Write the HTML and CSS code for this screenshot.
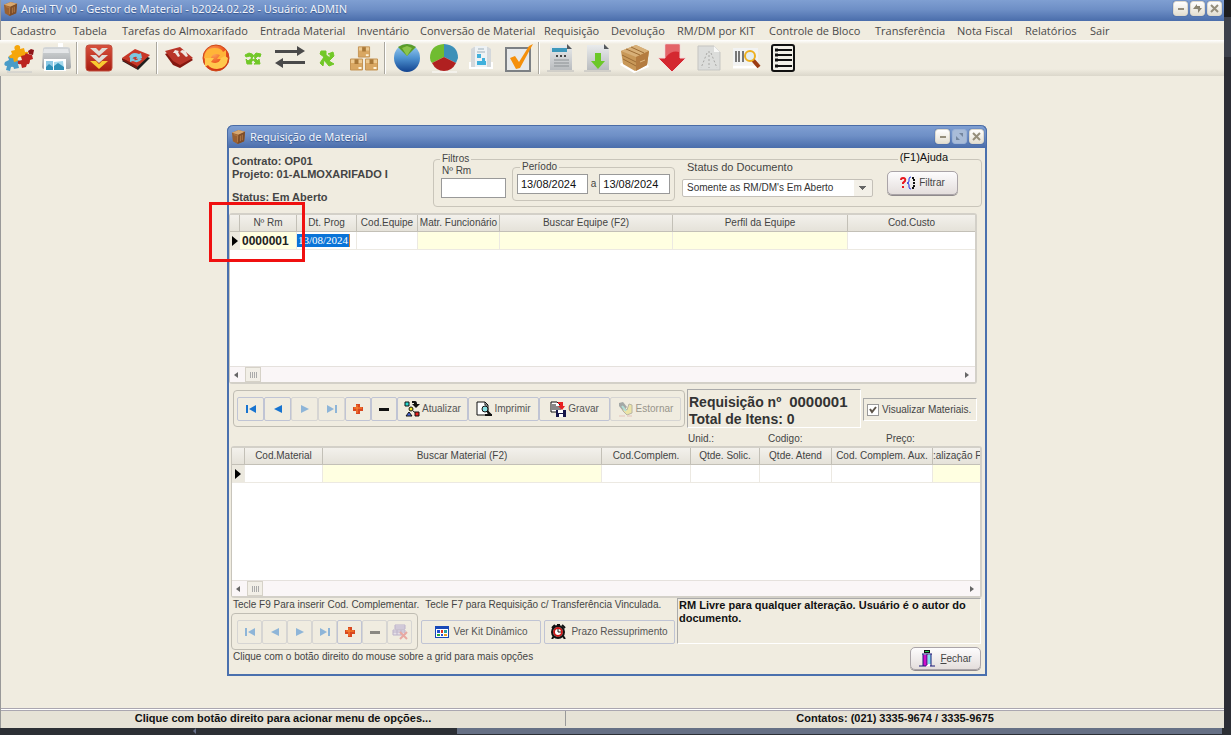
FILE: index.html
```html
<!DOCTYPE html>
<html lang="pt-BR">
<head>
<meta charset="utf-8">
<title>Aniel TV v0 - Gestor de Material</title>
<link rel="stylesheet" href="styles.css">
</head>
<body>
<svg class="defs" width="0" height="0" aria-hidden="true">
  <defs>
    <linearGradient id="gBlue" x1="0" y1="0" x2="0" y2="1"><stop offset="0" stop-color="#9fd0f2"/><stop offset=".5" stop-color="#4e92d0"/><stop offset="1" stop-color="#12438f"/></linearGradient>
    <linearGradient id="gRed" x1="0" y1="0" x2="0" y2="1"><stop offset="0" stop-color="#d8503c"/><stop offset="1" stop-color="#a81c10"/></linearGradient>
    <linearGradient id="gGrey" x1="0" y1="0" x2="0" y2="1"><stop offset="0" stop-color="#e9ebec"/><stop offset="1" stop-color="#b9bcbf"/></linearGradient>
    <linearGradient id="gTray" x1="0" y1="0" x2="0" y2="1"><stop offset="0" stop-color="#d4d7d9"/><stop offset="1" stop-color="#9fa3a6"/></linearGradient>
    <radialGradient id="gOrange" cx=".4" cy=".3" r=".8"><stop offset="0" stop-color="#ffb060"/><stop offset=".5" stop-color="#ee5a22"/><stop offset="1" stop-color="#c02010"/></radialGradient>
    <symbol id="crate" viewBox="0 0 16 16"><path d="M1 4 8 1l7 2-1 10-7 3-5-3z" fill="#9a6030"/><path d="M1 4 8 1l7 2-7 3z" fill="#d8a870"/><path d="M8 6l7-3-1 10-7 3z" fill="#7c4c28"/><path d="M3 6l4 1v7M10 7v6M12 6v6" stroke="#b47c48" fill="none"/></symbol>
    <symbol id="first" viewBox="0 0 12 12"><path d="M1 2h2v8H1zM11 2v8L4 6z" fill="currentColor"/></symbol>
    <symbol id="prev" viewBox="0 0 12 12"><path d="M10 2v8L2 6z" fill="currentColor"/></symbol>
    <symbol id="next" viewBox="0 0 12 12"><path d="M2 2v8l8-4z" fill="currentColor"/></symbol>
    <symbol id="last" viewBox="0 0 12 12"><path d="M9 2h2v8H9zM1 2v8l7-4z" fill="currentColor"/></symbol>
    <symbol id="plus" viewBox="0 0 12 12"><path d="M4 1h4v3h3v4H8v3H4V8H1V4h3z" fill="#d84820"/><path d="M5 2v8M2 5h8" stroke="#ff8a30" fill="none"/></symbol>
    <symbol id="minus" viewBox="0 0 12 12"><path d="M1 5h10v3H1z" fill="currentColor"/></symbol>
    <symbol id="box" viewBox="0 0 14 14"><path d="M1 2h12v11H1z" fill="#d9a762"/><path d="M1 2h12v4H1z" fill="#edc98f"/><path d="M5 2h4v5H5z" fill="#a87838"/><path d="M9 10h3v2H9z" fill="#fff3d8"/><path d="M1 2h12v11H1z" fill="none" stroke="#c49454"/></symbol>
  </defs>
</svg>
<div class="screen">
  <div class="app">
    <header class="titlebar">
      <svg class="app-icon"><use href="#crate"/></svg>
      <h1 class="title">Aniel TV v0 - Gestor de Material - b2024.02.28 - Usuário: ADMIN</h1>
      <div class="window-buttons">
        <button class="wbtn" aria-label="Minimizar"><svg viewBox="0 0 13 13"><path d="M4 6h6v2H4z" fill="#958e7c"/></svg></button>
        <button class="wbtn" aria-label="Restaurar"><svg viewBox="0 0 13 13"><path d="M6 2v5H2zM7 11V6h4zM6 7V4h3v4z" fill="#8a8472"/></svg></button>
        <button class="wbtn" aria-label="Sair do programa"><svg viewBox="0 0 13 13"><path d="M3 3l7 7M10 3l-7 7" stroke="#958e7c" stroke-width="2"/></svg></button>
      </div>
    </header>
    <nav class="menubar">
      <button>Cadastro</button><button>Tabela</button><button>Tarefas do Almoxarifado</button><button>Entrada Material</button><button>Inventário</button><button>Conversão de Material</button><button>Requisição</button><button>Devolução</button><button>RM/DM por KIT</button><button>Controle de Bloco</button><button>Transferência</button><button>Nota Fiscal</button><button>Relatórios</button><button>Sair</button>
    </nav>
    <div class="toolbar">
      <button class="tool" aria-label="Integração"><svg viewBox="0 0 32 32"><path d="M4 30h25" stroke="#c8c8c8"/><path d="M2 20l4-2-1-3q2-2 4 1l4-2 1 4q4 0 3 3l-2 1 1 4-5 1q0-3-3-2l-1 4-4-1 1-4q-4 0-2-4z" fill="#4a9cc8"/><path d="M8 9l4-1q-2-4 2-5 4 0 3 4l4-1 1 4q4-1 3 2l-2 2 1 3-5 1q0-4-3-3-2 1-1 4l-4 1-1-4q-4 1-4-2l3-2z" fill="#f5a60c"/><path d="M18 14l4-1q0-3 3-1l4 1 1 4-3 1q0 5-3 4l-1 3-4 1-1-4q-4 1-3-3l4-1z" fill="#bc2420"/><path d="M25 9l3-2 3 1-1 5-4-1z" fill="#8c1418"/></svg></button>
      <button class="tool" aria-label="Imprimir imagens"><svg viewBox="0 0 32 32"><path d="M18 1h5v4h-5z" fill="#fff"/><path d="M3 7q0-2 3-2h21q3 0 3 2l1 18q0 2-2 2H4q-2 0-2-2z" fill="url(#gTray)"/><path d="M4 7h24l1 4H3z" fill="#e4e6e8"/><path d="M4 17h22v12H4z" fill="#fff"/><path d="M6 19h7v9H6z" fill="#8cc8e4"/><path d="M14 20l9-1 1 9H14z" fill="#a4d8ec"/><path d="M6 25l3-3 4 3v3H6zM14 24l4-3 6 4v3H14z" fill="#2e90b8"/></svg></button>
      <span class="tool-sep"></span>
      <button class="tool" aria-label="Baixar"><svg viewBox="0 0 32 32"><rect x="3" y="3" width="26" height="26" rx="3" fill="url(#gRed)" stroke="#c05040"/><path d="M7 6h6l3 3 3-3h6l-9 8zM7 13h6l3 3 3-3h6l-9 8z" fill="#e0dcd6"/><path d="M7 19h6l3 3 3-3h6l-9 8z" fill="#f8c830"/></svg></button>
      <button class="tool" aria-label="Atualizar estoque"><svg viewBox="0 0 32 32"><path d="M2 19l13-9 15 6-12 12z" fill="#202020"/><path d="M2 16l13-9 15 6-13 12z" fill="#c83828"/><path d="M2 16v2l15 9v-3z" fill="#7c1810"/><path d="M9 15q3-6 10-3l2-1 1 5-6 1 1-2q-3-1-5 2zM22 17q-4 5-9 2l-3 1v-4l5 1-1 1q3 1 5-2z" fill="#7cc8e0"/></svg></button>
      <span class="tool-sep"></span>
      <button class="tool" aria-label="Devolver"><svg viewBox="0 0 32 32"><path d="M2 12l15-6 13 12-13 8-7-3z" fill="#841810"/><path d="M2 9l15-4 13 11-13 7-7-4z" fill="#b83428"/><path d="M10 11l2-3 4 1-1 1 2 4-2 1-3-4zM17 10l2-2 5 1-1 1 2 4-2 1-4-4z" fill="#eee6e0"/></svg></button>
      <button class="tool" aria-label="Reprocessar"><svg viewBox="0 0 32 32"><circle cx="16" cy="16" r="13" fill="url(#gOrange)" stroke="#d04818"/><path d="M4 16Q5 5 15 6q6 0 8 4l3-2v9h-9l3-4q-7-3-9 3l-4 2z" fill="#ffb438"/><path d="M28 16q-1 11-11 11-6 0-9-4l-3 2v-9h9l-3 4q8 3 10-4l4-2z" fill="#ffc84c"/></svg></button>
      <button class="tool" aria-label="Permutar"><svg viewBox="0 0 32 32"><path d="M8 13l4-2q4 0 6 5l3 3 1-2 1 5h-6l2-1-6-7-4 1zM24 12l-5-1-4 5-4 3-2-2 1 5h5l-1-2 7-6 2 1z" fill="#72c828" stroke="#72c828"/></svg></button>
      <button class="tool" aria-label="Transferir"><svg viewBox="0 0 32 32"><path d="M1 8h22V4l8 5-8 5v-3H1zM31 22H9v4l-8-5 8-5v3h22z" fill="#4a4a4a"/></svg></button>
      <button class="tool" aria-label="Trocar"><svg viewBox="0 0 32 32"><path d="M10 9h5v4l4 3v-4h-2l5-2 1 4-5 5 5 3-5 2-5-6-1 6-3-3 4-6-4-3z" fill="#72c828" stroke="#72c828"/></svg></button>
      <button class="tool" aria-label="Estoque"><svg viewBox="0 0 32 32"><use href="#box" x="9" y="3" width="14" height="13"/><use href="#box" x="1" y="15" width="15" height="14"/><use href="#box" x="16" y="15" width="15" height="14"/></svg></button>
      <span class="tool-sep"></span>
      <button class="tool" aria-label="Gráfico azul"><svg viewBox="0 0 32 32"><ellipse cx="16" cy="16" rx="13" ry="14" fill="url(#gBlue)"/><path d="M16 14L7 5q9-6 18 0z" fill="#5c9c28"/><path d="M16 14l-5-8 5-2 5 2z" fill="#8cc44c"/></svg></button>
      <button class="tool" aria-label="Gráfico por grupos"><svg viewBox="0 0 32 32"><path d="M4 30h25" stroke="#fff"/><path d="M16 15V2Q2 3 2 16q0 3 2 5z" fill="#70bc30"/><path d="M16 15V2q14 1 14 14l-2 5z" fill="#3c90b8"/><path d="M16 15l12 6q-4 8-12 8T4 21z" fill="#b02020"/></svg></button>
      <button class="tool" aria-label="Relatório impresso"><svg viewBox="0 0 32 32"><path d="M4 20h24v7H4z" fill="#fff"/><path d="M6 7l3-2h14l3 2v18H6z" fill="#d4d8db"/><path d="M10 4h12v21H10z" fill="#eef2f4"/><path d="M13 7h6M12 10h8" stroke="#9cb0bc"/><path d="M12 12h4v4h-4zM12 19h9v4h-9zM17 16h3v3h-3z" fill="#40b0dc"/></svg></button>
      <button class="tool" aria-label="Conferir"><svg viewBox="0 0 32 32"><rect x="4" y="6" width="24" height="23" fill="#e8eaeb" stroke="#7c8084" stroke-width="2"/><path d="M8 16l5-2 4 6L27 4l4-2-13 24-4 1z" fill="#f5900c"/></svg></button>
      <span class="tool-sep"></span>
      <button class="tool" aria-label="Requisição"><svg viewBox="0 0 32 32"><path d="M5 3h17l5 4v21H5z" fill="url(#gGrey)"/><path d="M22 2v5h5z" fill="#54585c"/><path d="M7 6h15v4H7z" fill="#3c98bc"/><path d="M11 14h2M15 14h2M19 14h2" stroke="#444" stroke-width="2"/><path d="M9 18h15M9 21h15M9 24h15" stroke="#8c9194"/><path d="M2 29h27" stroke="#b8b8b8"/></svg></button>
      <button class="tool" aria-label="Importar"><svg viewBox="0 0 32 32"><path d="M5 3h17l5 4v21H5z" fill="url(#gGrey)"/><path d="M22 2v5h5z" fill="#54585c"/><path d="M13 11h6v8h4l-7 8-7-8h4z" fill="#6cc828"/><path d="M2 29h27" stroke="#b8b8b8"/></svg></button>
      <button class="tool" aria-label="Caixa"><svg viewBox="0 0 32 32"><path d="M1 23l14 8 15-6-2-4H2z" fill="#fff"/><path d="M2 9l15-6 13 6-2 14-12 6L4 22z" fill="#c89858"/><path d="M2 9l15-6 13 6-13 6z" fill="#d8b078"/><path d="M17 15l13-6-2 14-11 6z" fill="#b47c40"/><path d="M3 13l14 7M4 17l13 7M7 7l14 6M12 5l13 6" fill="none" stroke="#9c6c34"/><path d="M21 20l5-2" stroke="#e0b880"/></svg></button>
      <button class="tool" aria-label="Baixa"><svg viewBox="0 0 32 32"><path d="M9 2h15v14h6L16 30 2 16h7z" fill="#d42830" stroke="#f4dada"/><path d="M10 3h13v7q-7-2-13 5z" fill="#e46468"/></svg></button>
      <button class="tool" aria-label="Documento"><svg viewBox="0 0 32 32"><path d="M5 4h16l6 6v18H5z" fill="#dcdddb" stroke="#c5c5c2"/><path d="M21 4v6h6z" fill="#f8f8f6"/><path d="M14 11L8 26M18 11l6 15M16 9v17" stroke="#a8a8a5" stroke-dasharray="2 2"/></svg></button>
      <button class="tool" aria-label="Pesquisar código"><svg viewBox="0 0 32 32"><path d="M3 6h25v17H3z" fill="#f2f3f3"/><path d="M6 9v11M9 9v11M13 9v11" stroke="#777" stroke-width="2"/><path d="M3 25h25" stroke="#fff" stroke-width="3"/><path d="M23 18l6 7" stroke="#9c3c14" stroke-width="4"/><circle cx="20" cy="14" r="5" fill="#e4eef2" stroke="#eeb020" stroke-width="2"/></svg></button>
      <button class="tool" aria-label="Lista"><svg viewBox="0 0 32 32"><rect x="5" y="3" width="22" height="26" rx="2" fill="#f2f0e8" stroke="#111" stroke-width="2"/><path d="M8 8h3M8 13h3M8 18h3M8 24h3" stroke="#111" stroke-width="3"/><path d="M11 8h14M11 13h14M11 18h14M11 24h14" stroke="#111" stroke-width="2"/></svg></button>
    </div>

    <main class="workspace">
      <section class="window" aria-label="Requisição de Material">
        <header class="window-title">
          <svg class="app-icon"><use href="#crate"/></svg>
          <h2 class="title">Requisição de Material</h2>
          <div class="window-buttons">
            <button class="wbtn" aria-label="Minimizar janela"><svg viewBox="0 0 13 13"><path d="M4 6h6v2H4z" fill="#958e7c"/></svg></button>
            <button class="wbtn wbtn-off" disabled aria-label="Maximizar janela"><svg viewBox="0 0 13 13"><path d="M6 3h4v4zM3 6v4h4z" fill="#74869e"/></svg></button>
            <button class="wbtn" aria-label="Fechar janela"><svg viewBox="0 0 13 13"><path d="M3 3l7 7M10 3l-7 7" stroke="#958e7c" stroke-width="2"/></svg></button>
          </div>
        </header>

        <div class="window-head">
          <div class="contract">
            <p>Contrato: OP01</p>
            <p>Projeto: 01-ALMOXARIFADO I</p>
            <p class="status">Status: Em Aberto</p>
          </div>
          <fieldset class="filters">
            <legend>Filtros</legend>
            <span class="help">(F1)Ajuda</span>
            <div class="rm-field">
              <label for="rm">Nº Rm</label>
              <input id="rm" type="text">
            </div>
            <fieldset class="period">
              <legend>Período</legend>
              <input type="text" aria-label="Data inicial" value="13/08/2024">
              <span>a</span>
              <input type="text" aria-label="Data final" value="13/08/2024">
            </fieldset>
            <div class="status-field">
              <label for="docstatus">Status do Documento</label>
              <select id="docstatus"><option>Somente as RM/DM's Em Aberto</option></select>
            </div>
            <button class="soft-btn filter-btn"><svg width="17" height="14" viewBox="0 0 17 14"><path d="M1 4q0-2 2-2 3 0 2 3L3 7v1M3 10v2" fill="none" stroke="#e81820" stroke-width="2"/><path d="M11 1Q9 1 9 3v2q0 2-2 2 2 0 2 2v2q0 2 2 2" fill="none" stroke="#2030e0"/><path d="M12 2h2v10h-2" fill="none" stroke="#111" stroke-width="2" stroke-dasharray="2 1"/></svg>Filtrar</button>
          </fieldset>
        </div>

        <div class="grid grid-top">
          <table>
            <colgroup><col class="c10"><col class="c57"><col class="c60"><col class="c61"><col class="c82"><col class="c173"><col class="c175"><col></colgroup>
            <thead><tr><th></th><th>Nº Rm</th><th>Dt. Prog</th><th>Cod.Equipe</th><th>Matr. Funcionário</th><th>Buscar Equipe (F2)</th><th>Perfil da Equipe</th><th>Cod.Custo</th></tr></thead>
            <tbody><tr><td class="marker"><svg width="6" height="10" viewBox="0 0 6 10"><path d="M0 0l6 5-6 5z"/></svg></td><td class="key">0000001</td><td class="editing"><span>13/08/2024</span></td><td></td><td class="lookup"></td><td class="lookup"></td><td class="lookup"></td><td></td></tr></tbody>
          </table>
          <div class="scroll"><button class="arrow-left" aria-label="Rolar à esquerda"></button><span class="thumb"></span><button class="arrow-right" aria-label="Rolar à direita"></button></div>
        </div>

        <div class="middle">
          <div class="bar">
            <button class="flat nav" aria-label="Primeiro"><svg><use href="#first"/></svg></button>
            <button class="flat nav" aria-label="Anterior"><svg><use href="#prev"/></svg></button>
            <button class="flat nav" disabled aria-label="Próximo"><svg><use href="#next"/></svg></button>
            <button class="flat nav" disabled aria-label="Último"><svg><use href="#last"/></svg></button>
            <button class="flat nav edit" aria-label="Incluir"><svg><use href="#plus"/></svg></button>
            <button class="flat nav edit dark" aria-label="Excluir"><svg><use href="#minus"/></svg></button>
            <button class="flat action"><svg class="i16" viewBox="0 0 16 16"><path d="M1 1h4v4H1z" fill="#28d8d0" stroke="#111"/><path d="M8 0h3q2 0 2 3h3l-4 4-4-4h2V2H8z" fill="#111"/><circle cx="7" cy="8" r="2" fill="#f0e820" stroke="#111"/><path d="M2 15h6l-3-4zM9 10l3 2" fill="#4868e0" stroke="#111"/><path d="M11 11h4v4h-4z" fill="#e82020" stroke="#111"/></svg>Atualizar</button>
            <button class="flat action"><svg class="i16" viewBox="0 0 16 16"><path d="M1 1h8l3 3v10H1z" fill="#fff" stroke="#111"/><path d="M9 1v3h3" fill="none" stroke="#111"/><circle cx="9" cy="8" r="3" fill="#88e0e4" stroke="#111"/><path d="M11 10l4 4M9 14h7" stroke="#111" stroke-width="2"/></svg>Imprimir</button>
            <button class="flat action"><svg class="i16" viewBox="0 0 16 16"><path d="M1 1h6l3 3v7H1z" fill="#fff" stroke="#111"/><path d="M2 4h4M2 6h7M2 8h7" stroke="#111"/><path d="M8 1h5v4h2l-3 4-4-4h2V3H8z" fill="#e82020"/><path d="M6 9h10v7H6z" fill="#16164a"/><path d="M8 9h5v3H8zM9 13h4v3H9z" fill="#fff"/></svg>Gravar</button>
            <button class="flat action" disabled><svg class="i16" viewBox="0 0 16 16"><path d="M1 2l4-1 4 5-4 4-4-5z" fill="#485860"/><path d="M5 5l4 4 2-6 3 1v8l-5 2-4-4z" fill="#e8dc60" stroke="#77745c"/><path d="M4 5l4 5" stroke="#60d0d0" stroke-width="2"/><path d="M1 15h6M9 15h5" stroke="#d89090"/></svg>Estornar</button>
          </div>
          <div class="summary">
            <p>Requisição nº <strong>0000001</strong></p>
            <p>Total de Itens: 0</p>
          </div>
          <div class="check"><span class="tick"><input id="showmat" type="checkbox" checked><svg viewBox="0 0 12 12"><path d="M3 5l2 3 4-5" fill="none" stroke="#5c5348" stroke-width="2"/></svg></span><label for="showmat">Visualizar Materiais.</label></div>
        </div>

        <div class="facts"><span>Unid.:</span><span>Codigo:</span><span>Preço:</span></div>

        <div class="grid grid-bottom">
          <table>
            <colgroup><col class="c13"><col class="c78"><col class="c279"><col class="c89"><col class="c69"><col class="c72"><col class="c101"><col></colgroup>
            <thead><tr><th></th><th>Cod.Material</th><th>Buscar Material (F2)</th><th>Cod.Complem.</th><th>Qtde. Solic.</th><th>Qtde. Atend</th><th>Cod. Complem. Aux.</th><th class="clipped">:alização F</th></tr></thead>
            <tbody><tr><td class="marker"><svg width="6" height="10" viewBox="0 0 6 10"><path d="M0 0l6 5-6 5z"/></svg></td><td></td><td class="lookup"></td><td></td><td></td><td></td><td></td><td class="lookup"></td></tr></tbody>
          </table>
          <div class="scroll"><button class="arrow-left" aria-label="Rolar materiais à esquerda"></button><span class="thumb"></span><button class="arrow-right" aria-label="Rolar materiais à direita"></button></div>
        </div>

        <div class="lower">
          <div class="lower-left">
            <p class="hints"><span>Tecle F9 Para inserir Cod. Complementar.</span><span>Tecle F7 para Requisição c/ Transferência Vinculada.</span></p>
            <div class="lower-bars">
              <div class="bar bar-small">
                <button class="flat nav" disabled aria-label="Primeiro material"><svg><use href="#first"/></svg></button>
                <button class="flat nav" disabled aria-label="Material anterior"><svg><use href="#prev"/></svg></button>
                <button class="flat nav" disabled aria-label="Próximo material"><svg><use href="#next"/></svg></button>
                <button class="flat nav" disabled aria-label="Último material"><svg><use href="#last"/></svg></button>
                <button class="flat nav" aria-label="Incluir material"><svg><use href="#plus"/></svg></button>
                <button class="flat nav dark" disabled aria-label="Excluir material"><svg><use href="#minus"/></svg></button>
                <button class="flat nav" disabled aria-label="Limpar materiais"><svg class="i16" viewBox="0 0 16 16"><path d="M3 1h10v4H3zM1 6h12v5H1z" fill="#d8d0f0" stroke="#8070b0"/><path d="M3 3h10M1 8h12M5 6v5M9 6v5" stroke="#8070b0"/><path d="M8 8l7 7M15 8l-7 7" stroke="#e05858" stroke-width="2"/></svg></button>
              </div>
              <button class="flat wide-a"><svg width="14" height="12" viewBox="0 0 14 12"><path d="M0 0h14v12H0z" fill="#1848b8"/><path d="M1 3h12v8H1z" fill="#fff"/><path d="M2 4h3v3H2z" fill="#2050d0"/><path d="M6 4h2v3H6z" fill="#e03020"/><path d="M9 4h3v3H9z" fill="#28a0a0"/><path d="M2 8h3v2H2z" fill="#28a838"/><path d="M6 8h2v2H6z" fill="#2050d0"/><path d="M9 8h3v2H9z" fill="#e8a020"/></svg>Ver Kit Dinâmico</button>
              <button class="flat wide-b"><svg width="15" height="15" viewBox="0 0 15 15"><path d="M3 12l-2 3M12 12l2 3M1 4l3-3M14 4l-3-3M6 1h3" stroke="#111" stroke-width="2"/><circle cx="7" cy="8" r="4" fill="#fff" stroke="#c81818" stroke-width="2"/><circle cx="7" cy="8" r="6" fill="none" stroke="#111" stroke-width="2"/><path d="M7 5v3h3" fill="none" stroke="#111"/></svg>Prazo Ressuprimento</button>
            </div>
          </div>
          <p class="memo">RM Livre para qualquer alteração. Usuário é o autor do documento.</p>
        </div>

        <footer class="window-foot">
          <p>Clique com o botão direito do mouse sobre a grid para mais opções</p>
          <button class="soft-btn close-btn"><svg width="16" height="17" viewBox="0 0 16 17"><path d="M5 0h6v3H5z" fill="#111"/><path d="M6 1h4v1H6z" fill="#20d050"/><path d="M4 4h8v12H4z" fill="#fff"/><path d="M4 5h4v11H4z" fill="#d010c8"/><path d="M9 5h3v9H9z" fill="#80e0f0"/><path d="M0 16h7M11 16h5M3 4h10M12 4v12M8 4v11M4 4v12" fill="none" stroke="#181878"/></svg><span><u>F</u>echar</span></button>
        </footer>
        <span class="highlight"></span>
      </section>
    </main>

    <footer class="statusbar">
      <span>Clique com botão direito para acionar menu de opções...</span>
      <span>Contatos: (021) 3335-9674 / 3335-9675</span>
    </footer>
  </div>
  <div class="edge-right"></div>
  <div class="edge-bottom"><span class="edge-arrow"></span><span class="edge-thumb"></span></div>
</div>
</body>
</html>
```

FILE: styles.css
```css
* { box-sizing: border-box; }
body { margin: 0; font: 10px/12px "Liberation Sans", sans-serif; color: #444; background: #2b2d33; }
p, h1, h2 { margin: 0; }
button, input, select { font: inherit; color: inherit; margin: 0; }
button { padding: 0; border: 0; background: none; }
svg { display: block; flex: none; }
.defs { position: absolute; }

.screen { display: grid; grid-template-columns: 1fr 7px; grid-template-rows: 1fr 7px; height: 100vh; }
.app { display: flex; flex-direction: column; min-width: 0; background: #f0ece0; border-left: 1px solid #999; }

.titlebar, .window-title { display: flex; align-items: center; background: linear-gradient(#7f9fd2, #6e8fc6 45%, #4a6dab); }
.titlebar { height: 21px; padding: 0 2px 4px; }
.app-icon { width: 15px; height: 15px; }
.title { flex: 1; margin-left: 3px; color: #f2f5fb; font: 11px/16px "Noto Sans", "Open Sans", sans-serif; text-shadow: 0 1px 1px #35558e; }
.window-buttons { display: flex; gap: 2px; }
.wbtn { width: 15px; height: 15px; border: 1px solid #ddd9cd; border-radius: 3px; background: linear-gradient(#fff, #e4dfd2); box-shadow: 0 0 1px #223a66; }
.wbtn svg { width: 13px; height: 13px; }
.wbtn-off { background: #a9bcd8; border-color: #9bb2d6; box-shadow: none; }

.menubar { display: grid; grid-template-columns: 63px 49px 138px 97px 63px 124px 67px 66px 92px 106px 82px 68px 65px 30px; height: 19px; padding-left: 9px; }
.menubar button { text-align: left; white-space: nowrap; font: 11px/18px "Open Sans", sans-serif; color: #4a4a4a; }

.toolbar { display: flex; height: 36px; margin-left: -1px; background: linear-gradient(#fff, #f0ece0 4px, #f0ece0 29px, #dbd7cb); }
.tool { width: 37px; display: flex; align-items: center; justify-content: center; }
.tool svg { width: 32px; height: 32px; }
.tool-sep { width: 2px; margin: 2px; border-left: 1px solid #aaa79e; background: #fff; }

.workspace { position: relative; flex: 1; }
.window { position: absolute; left: 226px; top: 49px; width: 760px; border: 2px solid #4a70ae; border-top: 0; border-radius: 6px 6px 0 0; background: #f0ece0; padding-bottom: 4px; }
.window-title { height: 23px; padding: 0 2px 1px 3px; margin: 0 -2px; border-radius: 6px 6px 0 0; border: 1px solid #4a6ca6; border-bottom: 0; }
.window-title .title { margin-left: 4px; }

.window-head { display: flex; padding: 2px 3px 6px; gap: 4px; }
.contract { width: 197px; padding-top: 5px; font: bold 11px/13px "Liberation Sans", sans-serif; white-space: nowrap; }
.status { padding-top: 10px; }
fieldset { margin: 0; padding: 0; min-width: 0; border: 1px solid #c9c5ba; border-radius: 4px; }
legend { padding: 0 2px; }
.filters { position: relative; flex: 1; display: flex; align-items: flex-start; padding: 0 7px; margin-top: 3px; height: 54px; }
.filters > legend { margin-left: -1px; }
.help { position: absolute; right: 31px; top: -14px; padding: 0 2px; background: #f0ece0; color: #111; font-size: 11px; }
.rm-field { width: 71px; display: flex; flex-direction: column; gap: 1px; }
.rm-field label { padding-left: 1px; }
.rm-field input, .period input { height: 20px; border: 1px solid #999; background: #fff; padding: 0 3px; color: #111; }
.rm-field input { width: 65px; }
.period { display: flex; align-items: center; gap: 3px; padding: 0 4px 5px; width: 163px; height: 40px; margin-top: -4px; }
.period > legend { margin-left: 3px; }
.period input { flex: 1; min-width: 0; font-size: 11px; }
.status-field { display: flex; flex-direction: column; gap: 6px; margin: -4px 0 0 7px; }
.status-field label { padding-left: 5px; font-size: 11px; }
.status-field select { width: 191px; height: 18px; border: 1px solid #c4c0b8; border-radius: 2px; padding: 0 4px; color: #333; appearance: none; background: linear-gradient(#666, #666) no-repeat right 6px top 6px / 7px 1px, linear-gradient(#666, #666) no-repeat right 7px top 7px / 5px 1px, linear-gradient(#666, #666) no-repeat right 8px top 8px / 3px 1px, linear-gradient(#666, #666) no-repeat right 9px top 9px / 1px 1px, linear-gradient(#f3f0e8, #f3f0e8) no-repeat right / 18px 100%, #fff; }
.soft-btn { display: flex; align-items: center; justify-content: center; gap: 2px; width: 71px; height: 24px; border: 1px solid #aaa4a8; border-radius: 5px; background: linear-gradient(#fdfcfd, #e4dedc); box-shadow: 0 1px 0 #8f8a8c; }
.filter-btn { margin: 6px 0 0 14px; }

.grid { display: flex; flex-direction: column; background: #fff; border: 2px solid #d3d0c8; border-left: 1px solid #c8c5bc; border-radius: 3px; }
.grid-top { height: 171px; margin-right: 8px; }
.grid-bottom { height: 152px; margin: 0 3px 0 2px; }
.grid table { width: 100%; table-layout: fixed; border-collapse: separate; border-spacing: 0; }
.grid th { height: 17px; padding: 0; font-weight: normal; white-space: nowrap; overflow: hidden; background: linear-gradient(#f3f1ec, #e5e2d9); border-right: 1px solid #c3c0b7; border-bottom: 1px solid #c3c0b7; }
.grid td { height: 18px; padding: 0; border-right: 1px solid #ece9e2; border-bottom: 1px solid #ece9e2; }
.grid th:last-child, .grid td:last-child { border-right: 0; }
.grid .lookup, .grid .key { background: #ffffe1; }
.grid .key { padding-left: 2px; color: #222; font: bold 12px/14px "Liberation Sans", sans-serif; text-align: left; }
.grid .marker { background: #ece9df; }
.marker svg { margin: 0 auto; }
.editing span { display: block; background: #0a74d8; color: #fff; font: 11px/13px "Liberation Serif", serif; width: 53px; padding-left: 1px; border-right: 1px solid #e08030; }
.grid .clipped { text-align: left; }
.c10 { width: 10px; } .c13 { width: 13px; } .c57 { width: 57px; } .c60 { width: 60px; } .c61 { width: 61px; } .c69 { width: 69px; } .c72 { width: 72px; } .c78 { width: 78px; } .c82 { width: 82px; } .c89 { width: 89px; } .c101 { width: 101px; } .c173 { width: 173px; } .c175 { width: 175px; } .c279 { width: 279px; }
.scroll { display: flex; align-items: center; height: 16px; margin-top: auto; padding: 0 6px 0 4px; background: #faf6f7; border-top: 1px solid #e5e1dd; }
.arrow-left, .arrow-right { border: 4px solid transparent; border-top-width: 3px; border-bottom-width: 3px; }
.arrow-left { border-right-color: #666; border-left: 0; }
.arrow-right { border-left-color: #666; border-right: 0; margin-left: auto; }
.thumb { width: 16px; height: 15px; margin-left: 7px; border: 1px solid #d6d2c8; background: repeating-linear-gradient(90deg, #aaa 0 1px, transparent 1px 2px) no-repeat center / 7px 6px, #f2efe7; }

.middle { display: flex; padding: 6px 8px 0 4px; gap: 2px; height: 44px; }
.bar { display: flex; align-items: center; height: 37px; padding: 0 3px; border: 1px solid #c0bdb3; border-radius: 4px; }
.flat { display: flex; align-items: center; justify-content: center; height: 24px; border: 1px solid #c0c4d4; border-radius: 2px; color: #555; white-space: nowrap; }
.flat:disabled { border-color: #d6d5d3; color: #98958b; }
.flat:disabled svg { opacity: .45; }
.nav { width: 27px; color: #1874d0; }
.nav:disabled { color: #1874d0; }
.nav.edit { width: 26px; }
.nav svg { width: 12px; height: 12px; }
.nav.dark, .nav.dark:disabled { color: #111; }
.flat .i16 { width: 16px; height: 16px; }
.action { width: 71px; gap: 2px; }
.summary { width: 174px; height: 39px; padding: 3px 1px; border: 1px solid; border-color: #aaa #fff #fff #aaa; margin-top: -1px; color: #333; font: bold 14px/17px "Liberation Sans", sans-serif; white-space: nowrap; }
.summary strong { font-size: 15px; margin-left: 4px; }
.check { display: flex; align-items: center; gap: 3px; flex: 1; height: 23px; margin-top: 8px; padding-left: 3px; border: 1px solid; border-color: #aaa #fff #fff #aaa; white-space: nowrap; }
.tick { display: grid; }
.tick > * { grid-area: 1 / 1; width: 12px; height: 12px; }
.tick input { appearance: none; border: 1px solid #999; background: #fff; }
.tick svg { pointer-events: none; }
.facts { display: grid; grid-template-columns: 80px 118px 1fr; height: 18px; padding: 5px 0 0 459px; }

.lower { display: flex; padding: 0 4px 0 2px; gap: 2px; height: 46px; }
.lower-left { display: flex; flex-direction: column; justify-content: space-between; width: 444px; height: 52px; }
.hints { display: flex; gap: 6px; padding-left: 2px; line-height: 14px; white-space: nowrap; }
.lower-bars { display: flex; align-items: center; gap: 3px; }
.bar-small { padding: 0 5px; }
.bar-small .nav { width: 25px; }
.wide-a { width: 120px; gap: 5px; }
.wide-b { flex: 1; gap: 5px; }
.memo { flex: 1; min-width: 0; padding: 0 1px; color: #111; font: bold 11px/13px "Liberation Sans", sans-serif; border: 1px solid; border-color: #aaa #fff #fff #aaa; }
.window-foot { display: flex; justify-content: space-between; padding: 3px 4px 0; align-items: flex-start; }
.window-foot p { padding-top: 4px; }
.close-btn { gap: 5px; height: 23px; }
.highlight { position: absolute; left: -20px; top: 77px; width: 96px; height: 60px; border: 3px solid #f01010; }

.statusbar { display: grid; grid-template-columns: 564px 1fr; height: 20px; background: #e6e2d6; border-top: 1px solid #aaa6b0; box-shadow: inset 0 1px #fff, inset 0 2px #aaa6b0; color: #111; font: bold 11px/18px "Liberation Sans", sans-serif; text-align: center; }
.statusbar span + span { border-left: 1px solid #999; margin: 2px 0; line-height: 14px; }
.edge-right { background: linear-gradient(#1d1d1f 17px, #3d414c 17px 57px, #2c2d35 57px); }
.edge-bottom { grid-column: 1 / -1; display: flex; align-items: flex-start; background: #2c2f35; }
.edge-arrow { border: 3px solid transparent; border-right-color: #66708a; border-left: 0; margin-left: 193px; width: 3px; }
.edge-thumb { flex: 1; height: 6px; margin: 0 9px 0 261px; background: #667085; }
```
